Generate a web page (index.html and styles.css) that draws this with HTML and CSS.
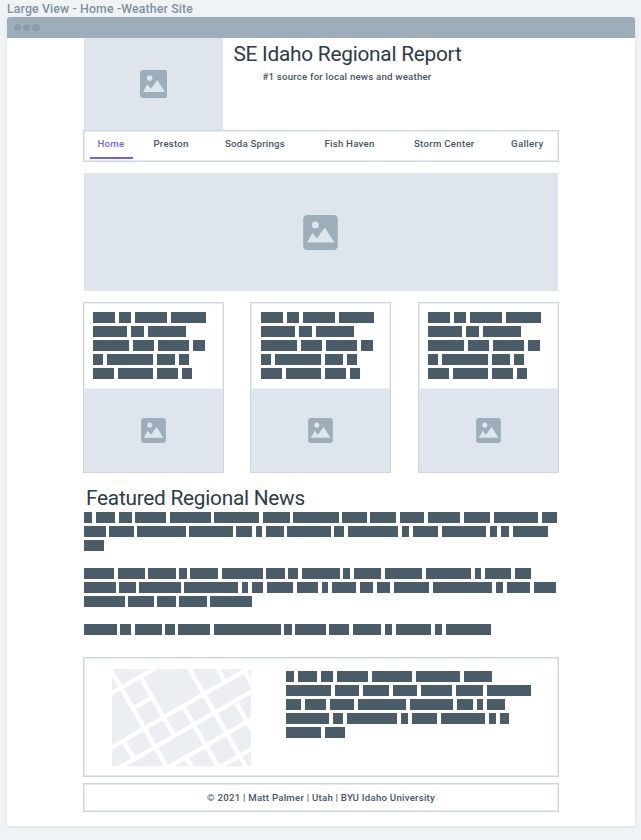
FILE: index.html
```
<!DOCTYPE html>
<html lang="en">
<head>
<meta charset="utf-8">
<title>SE Idaho Regional Report</title>
<link rel="stylesheet" href="styles.css">
</head>
<body>
<svg class="defs" aria-hidden="true">
  <symbol id="picture" viewBox="0 0 83 84">
    <rect width="83" height="84" rx="10" fill="#9dadb9"/>
    <circle cx="29" cy="24" r="8.5" fill="#dfe5ed"/>
    <path d="M9 66 22 43 33 56 52 30 75 66z" fill="#dfe5ed"/>
  </symbol>
</svg>
<div class="label"><span data-fit="186">Large View - Home -Weather Site</span></div>
<div class="window">
  <div class="titlebar"><i></i><i></i><i></i></div>
  <div class="page">
    <header class="header">
      <div class="logo"><svg class="icon-logo"><use href="#picture"/></svg></div>
      <div class="heading">
        <h1><span data-fit="228">SE Idaho Regional Report</span></h1>
        <p><span data-fit="169">#1 source for local news and weather</span></p>
      </div>
    </header>
    <nav class="nav outlined">
      <a class="active"><span data-fit="27">Home</span></a>
      <a><span data-fit="35">Preston</span></a>
      <a><span data-fit="60">Soda Springs</span></a>
      <a><span data-fit="50">Fish Haven</span></a>
      <a><span data-fit="60.5">Storm Center</span></a>
      <a><span data-fit="32.5">Gallery</span></a>
    </nav>
    <div class="hero"><svg class="icon-hero"><use href="#picture"/></svg></div>
    <div class="cards">
      <article class="card"><div class="copy" data-block="card"></div><div class="thumb"><svg class="icon-card"><use href="#picture"/></svg></div></article>
      <article class="card"><div class="copy shifted" data-block="card"></div><div class="thumb"><svg class="icon-card"><use href="#picture"/></svg></div></article>
      <article class="card"><div class="copy" data-block="card"></div><div class="thumb"><svg class="icon-card"><use href="#picture"/></svg></div></article>
    </div>
    <h2><span data-fit="219">Featured Regional News</span></h2>
    <div class="news" data-block="news"></div>
    <section class="location outlined">
      <svg class="map" viewBox="96 56 417 292" preserveAspectRatio="none">
        <rect x="96" y="56" width="417" height="292" fill="#ebeff4"/>
        <g stroke="#fff" stroke-width="13" fill="none">
          <path d="M90 131 235 48M90 294 513 50M103 360 520 120M240 365 520 203M395 364 520 292"/>
          <path d="M90 55 266 360M184 85 286 261M165 170 216 141M325 50 504 360M312 172 423 364M412 50 435 96M490 56 520 108M470 160 518 243M132 273 165 330M319 322 340 358"/>
        </g>
      </svg>
      <div class="details" data-block="details"></div>
    </section>
    <footer class="footer outlined"><span data-fit="228">© 2021 | Matt Palmer | Utah | BYU Idaho University</span></footer>
  </div>
</div>
<script src="script.js"></script>
</body>
</html>
```
FILE: styles.css
```
* { box-sizing: border-box; }
body { margin: 0; height: 840px; overflow: hidden; background: #eff3f6; font-family: Roboto, "Liberation Sans", sans-serif; color: #465665; }
h1, h2, p { margin: 0; font-weight: 400; }
span { white-space: nowrap; }
svg { display: block; flex: none; }
.defs { display: none; }
.label { height: 17px; padding: 2px 0 0 7px; font-size: 12.3px; line-height: 15px; font-weight: 500; color: #7d909f; }
.window { width: 627.5px; height: 809px; margin-left: 7px; background: #fff; border-radius: 3px 3px 0 0; box-shadow: 0 1px 4px rgba(70, 90, 110, .12); }
.titlebar { display: flex; gap: 1.8px; align-items: center; height: 21px; padding-left: 6.5px; background: #9dadb9; border-radius: 3px 3px 0 0; }
.titlebar i { width: 7.5px; height: 7.5px; border-radius: 50%; background: #8c9daa; }
.page { width: 476px; margin-left: 76px; }
.outlined { border: 1px solid #cbd6e0; box-shadow: inset 0 0 0 1px #e6ebf0; }
.header { display: flex; height: 92px; }
.logo { display: flex; align-items: center; justify-content: center; width: 139px; margin-left: 1px; background: #dfe5ed; }
.icon-logo { width: 27.5px; height: 28px; }
.heading { padding: 3px 0 0 10.5px; }
h1 { font-size: 20.8px; line-height: 26px; color: #2c3b49; }
.heading p { padding: 4px 0 0 29px; font-size: 9.7px; line-height: 12px; font-weight: 500; }
.nav { display: grid; grid-template-columns: 56px 71.5px 99.5px 89.5px 97px 1fr; height: 32px; padding-left: 5.5px; }
.nav a { padding: 7px 0 0 8px; font-size: 9.7px; line-height: 12px; font-weight: 500; }
.nav .active { width: 43px; height: 28px; color: #7765f5; border-bottom: 2px solid #6f5ff0; }
.hero { display: flex; align-items: center; justify-content: center; width: 474px; height: 118px; margin: 11px 0 0 1px; background: #dfe5ed; }
.icon-hero { width: 35px; height: 35px; margin: 1px 1px 0 0; }
.cards { display: grid; grid-template-columns: 141px 141px 141px; column-gap: 26px; margin-top: 11px; }
.card { height: 171px; border: 1px solid #cbd6e0; }
.card:last-child { margin: 0 -1px 0 1px; }
.copy { height: 86px; padding: 9px 0 0 9.3px; box-shadow: inset 0 0 0 1px #eef1f4; }
.shifted { padding-left: 10.3px; }
.thumb { display: flex; align-items: center; justify-content: center; height: 83px; background: #dfe5ed; }
.icon-card { width: 25px; height: 25px; }
h2 { height: 39px; padding: 12px 0 0 3px; font-size: 20.8px; line-height: 26px; color: #2c3b49; }
.news { height: 145px; padding-left: 1.4px; }
.line { display: flex; height: 11px; margin-bottom: 3px; }
.line b { flex: none; background: #4b5c69; }
.line b + b { margin-left: 3.8px; }
.location { display: flex; height: 120px; padding: 11px 0 0 28px; }
.map { width: 139px; height: 97.5px; }
.details { padding: 2px 0 0 35.3px; }
.footer { height: 29px; margin-top: 6px; padding-top: 8px; text-align: center; font-size: 9.7px; line-height: 12px; font-weight: 500; }
```
FILE: script.js
```
// Each line lists the start of every word bar and the end of the last one, in thirds of a pixel.
const blocks = {
  card: [[39,115,165,273,378],[39,151,202,318],[39,159,234,339,376],[39,80,229,297,328],[39,114,231,306,336]],
  news: [
    [12,47,115,165,268,402,547,639,786,870,960,1044,1150,1242,1384,1432],
    [12,87,171,327,468,526,557,621,762,804,966,999,1084,1230,1263,1297,1405],
    [12,72],
    [],
    [12,112,204,297,330,425,558,624,664,789,822,915,1038,1183,1215,1305,1353],
    [12,117,177,312,484,514,559,650,724,756,840,891,940,1059,1248,1281,1362,1428],
    [12,144,231,297,390,517],
    [],
    [12,120,163,255,294,401,612,645,747,819,915,948,1063,1098,1233]
  ],
  details: [
    [18,52,121,171,274,408,552,636],[18,165,249,339,423,528,621,753],
    [18,75,150,234,390,531,591,621,675],[18,159,201,363,396,483,627,660,687],[18,135,195]
  ]
};
const gap = 3.8;
document.querySelectorAll('[data-block]').forEach(el => {
  blocks[el.dataset.block].forEach(stops => {
    const line = document.createElement('div');
    line.className = 'line';
    for (let i = 0; i + 1 < stops.length; i++) {
      const bar = document.createElement('b');
      const last = i + 2 === stops.length;
      bar.style.width = ((stops[i + 1] - stops[i]) / 3 - (last ? 0.4 : gap)) + 'px';
      line.append(bar);
    }
    el.append(line);
  });
});
// Track each text run to its set measure.
document.querySelectorAll('[data-fit]').forEach(el => {
  const natural = el.getBoundingClientRect().width;
  el.style.letterSpacing = (el.dataset.fit - natural) / el.textContent.length + 'px';
});
```
